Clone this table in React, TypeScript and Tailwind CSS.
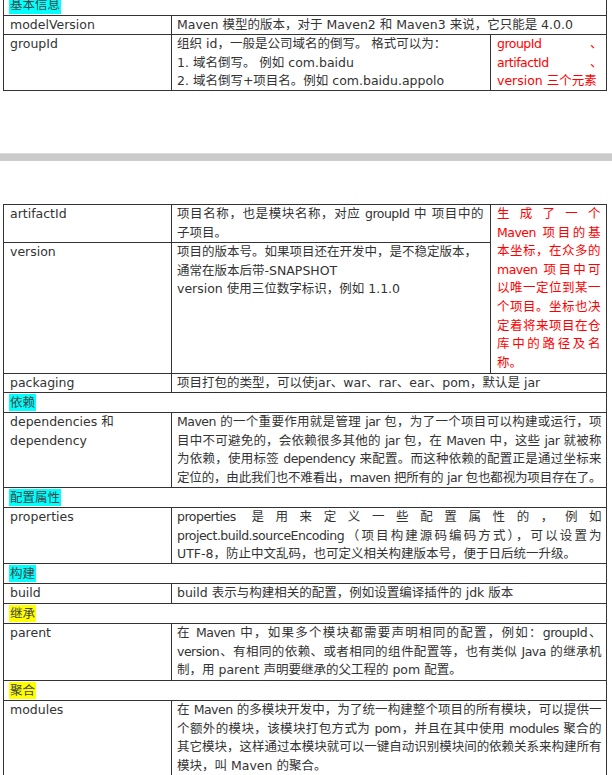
import React from 'react';

type Ln = { t: string; j?: boolean };

// justified single line; negative tracking lets long lines fit, justify spreads them back out
const J = 'text-justify [text-align-last:justify] whitespace-nowrap tracking-[-0.5px]';

function Lines({ lines }: { lines: Ln[] }) {
  return (
    <>
      {lines.map((l, i) => (
        <div key={i} className={l.j ? J : 'whitespace-nowrap'}>
          {l.t}
        </div>
      ))}
    </>
  );
}

function Section({ label, color }: { label: string; color: string }) {
  return (
    <div className="h-[20px] border-t border-[#333] px-[5px]">
      <span className={`${color} inline-block h-[17px] mt-[1px] px-[1px] leading-[17px] text-[#444]`}>{label}</span>
    </div>
  );
}

function Row({ h, name, lines }: { h: string; name: Ln[]; lines: Ln[] }) {
  return (
    <div className={`${h} flex border-t border-[#333]`}>
      <div className="w-[168px] shrink-0 border-r border-[#333] pl-[6px]">
        <Lines lines={name} />
      </div>
      <div className="flex-1 pl-[5px] pr-[5px]">
        <Lines lines={lines} />
      </div>
    </div>
  );
}

export default function App() {
  return (
    <div className="w-[612px] h-[775px] overflow-hidden bg-white text-[12.5px] leading-[18.6px] text-[#333] font-['DejaVu_Sans','Noto_Sans_CJK_SC',sans-serif]">
      {/* 基本信息 */}
      <div className="ml-[3px] w-[604px] -mt-[5px] border border-[#333]">
        <div className="h-[19px] px-[5px]">
          <span className="bg-[#00ffff] inline-block h-[18px] px-[1px] leading-[18px] text-[#444]">基本信息</span>
        </div>
        <Row
          h="h-[19px]"
          name={[{ t: 'modelVersion' }]}
          lines={[{ t: 'Maven 模型的版本，对于 Maven2 和 Maven3 来说，它只能是 4.0.0' }]}
        />
        <div className="h-[56px] flex border-t border-[#333]">
          <div className="w-[168px] shrink-0 border-r border-[#333] pl-[6px]">groupId</div>
          <div className="flex-1 pl-[5px]">
            <Lines
              lines={[
                { t: '组织 id，一般是公司域名的倒写。 格式可以为：' },
                { t: '1. 域名倒写。 例如 com.baidu' },
                { t: '2. 域名倒写+项目名。例如 com.baidu.appolo' },
              ]}
            />
          </div>
          <div className="w-[116px] shrink-0 border-l border-[#333] pl-[6px] pr-[4px] text-[#ff0000] overflow-hidden">
            <Lines lines={[{ t: 'groupId 、', j: true }, { t: 'artifactId 、', j: true }, { t: 'version 三个元素' }]} />
          </div>
        </div>
      </div>

      <div className="mt-[62px] h-[8px] bg-[#cbcbcb] border-t border-[#dadada]" />

      {/* 坐标 / 依赖 / ... */}
      <div className="ml-[3px] mt-[43px] w-[604px] border border-[#333]">
        <div className="flex">
          <div className="flex-1 flex flex-col">
            <div className="h-[37px] flex">
              <div className="w-[168px] shrink-0 border-r border-[#333] pl-[6px]">artifactId</div>
              <div className="flex-1 pl-[5px] pr-[7px]">
                <Lines lines={[{ t: '项目名称，也是模块名称，对应 groupId 中 项目中的', j: true }, { t: '子项目。' }]} />
              </div>
            </div>
            <div className="h-[131px] flex border-t border-[#333]">
              <div className="w-[168px] shrink-0 border-r border-[#333] pl-[6px]">version</div>
              <div className="flex-1 pl-[5px] pr-[7px]">
                <Lines
                  lines={[
                    { t: '项目的版本号。如果项目还在开发中，是不稳定版本，' },
                    { t: '通常在版本后带-SNAPSHOT' },
                    { t: 'version 使用三位数字标识，例如 1.1.0' },
                  ]}
                />
              </div>
            </div>
          </div>
          <div className="w-[116px] shrink-0 border-l border-[#333] px-[6px] text-[#ff0000]">
            <Lines
              lines={[
                { t: '生成了一个', j: true },
                { t: 'Maven 项目的基', j: true },
                { t: '本坐标，在众多的', j: true },
                { t: 'maven 项目中可', j: true },
                { t: '以唯一定位到某一', j: true },
                { t: '个项目。坐标也决', j: true },
                { t: '定着将来项目在仓', j: true },
                { t: '库中的路径及名', j: true },
                { t: '称。' },
              ]}
            />
          </div>
        </div>
        <Row
          h="h-[19px]"
          name={[{ t: 'packaging' }]}
          lines={[{ t: '项目打包的类型，可以使jar、war、rar、ear、pom，默认是 jar' }]}
        />
        <Section label="依赖" color="bg-[#00ffff]" />
        <Row
          h="h-[75px]"
          name={[{ t: 'dependencies 和' }, { t: 'dependency' }]}
          lines={[
            { t: 'Maven 的一个重要作用就是管理 jar 包，为了一个项目可以构建或运行，项', j: true },
            { t: '目中不可避免的，会依赖很多其他的 jar 包，在 Maven 中，这些 jar 就被称', j: true },
            { t: '为依赖，使用标签 dependency 来配置。而这种依赖的配置正是通过坐标来', j: true },
            { t: '定位的，由此我们也不难看出，maven 把所有的 jar 包也都视为项目存在了。', j: true },
          ]}
        />
        <Section label="配置属性" color="bg-[#00ffff]" />
        <Row
          h="h-[56px]"
          name={[{ t: 'properties' }]}
          lines={[
            { t: 'properties 是用来定义一些配置属性的，例如', j: true },
            { t: 'project.build.sourceEncoding（项目构建源码编码方式），可以设置为', j: true },
            { t: 'UTF-8，防止中文乱码，也可定义相关构建版本号，便于日后统一升级。' },
          ]}
        />
        <Section label="构建" color="bg-[#00ffff]" />
        <Row h="h-[20px]" name={[{ t: 'build' }]} lines={[{ t: 'build 表示与构建相关的配置，例如设置编译插件的 jdk 版本' }]} />
        <Section label="继承" color="bg-[#ffff00]" />
        <Row
          h="h-[57px]"
          name={[{ t: 'parent' }]}
          lines={[
            { t: '在 Maven 中，如果多个模块都需要声明相同的配置，例如：groupId、', j: true },
            { t: 'version、有相同的依赖、或者相同的组件配置等，也有类似 Java 的继承机', j: true },
            { t: '制，用 parent 声明要继承的父工程的 pom 配置。' },
          ]}
        />
        <Section label="聚合" color="bg-[#ffff00]" />
        <Row
          h="h-[76px]"
          name={[{ t: 'modules' }]}
          lines={[
            { t: '在 Maven 的多模块开发中，为了统一构建整个项目的所有模块，可以提供一', j: true },
            { t: '个额外的模块，该模块打包方式为 pom，并且在其中使用 modules 聚合的', j: true },
            { t: '其它模块，这样通过本模块就可以一键自动识别模块间的依赖关系来构建所有', j: true },
            { t: '模块，叫 Maven 的聚合。' },
          ]}
        />
      </div>
    </div>
  );
}
